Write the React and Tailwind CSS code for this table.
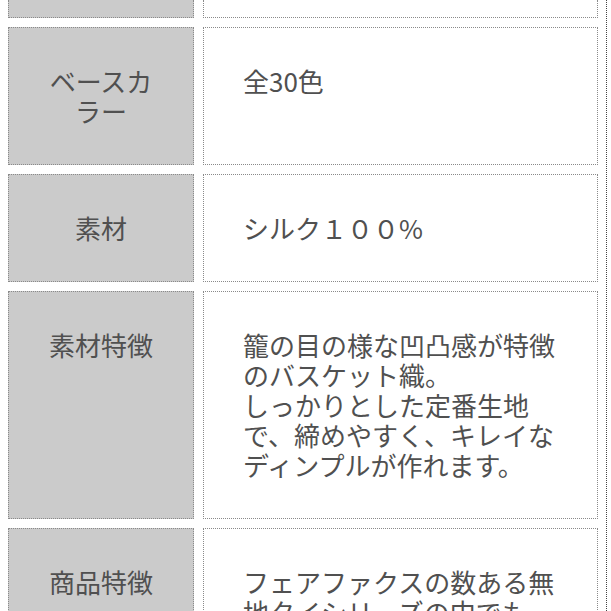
import React from 'react';

const rows = [
  { label: 'ベースカラー', value: '全30色' },
  { label: '素材', value: 'シルク１００%' },
  {
    label: '素材特徴',
    value: '籠の目の様な凹凸感が特徴のバスケット織。\nしっかりとした定番生地で、締めやすく、キレイなディンプルが作れます。',
  },
  { label: '商品特徴', value: 'フェアファクスの数ある無地タイシリーズの中でも' },
];

function App() {
  return (
    <div
      className="h-[611px] overflow-hidden bg-white text-[#505050]"
      style={{ fontFamily: '"Noto Sans CJK JP", "Noto Sans", sans-serif' }}
    >
      <div className="w-[607px] h-[611px] border-r border-dotted border-[#444]">
        <div className="grid grid-cols-[186px_395px] gap-x-[9px] gap-y-[9px] pl-[8px]">
          {/* top row, mostly scrolled out of view */}
          <div className="h-[18px] bg-[#cbcbcb] border-x border-b border-dotted border-[#8a8a8a]" />
          <div className="h-[18px] bg-white border-x border-b border-dotted border-[#8a8a8a]" />

          {rows.map((row) => (
            <React.Fragment key={row.label}>
              <div className="bg-[#cbcbcb] border border-dotted border-[#8a8a8a] px-[32px] py-[38px] text-center text-[26px] leading-[30px]">
                {row.label}
              </div>
              <div className="bg-white border border-dotted border-[#8a8a8a] pl-[39px] pr-[39px] pt-[38px] pb-[38px] text-[26px] leading-[30px] whitespace-pre-line">
                {row.value}
              </div>
            </React.Fragment>
          ))}
        </div>
      </div>
    </div>
  );
}

export default App;
